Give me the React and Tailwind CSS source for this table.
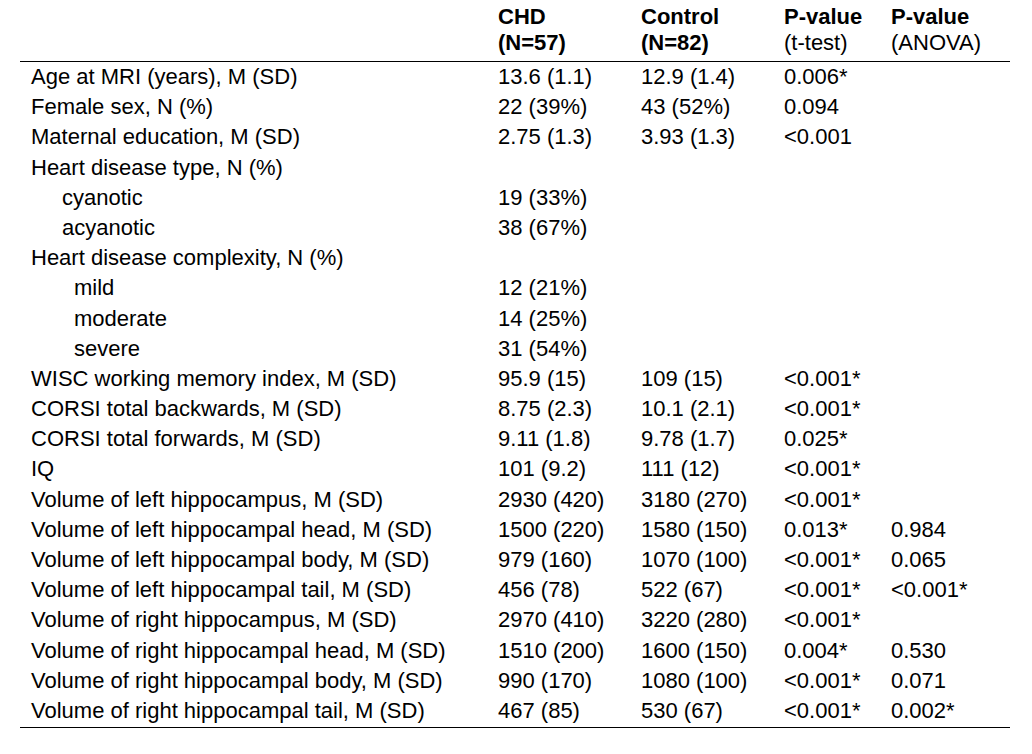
import React from "react";

const rows = [
  { label: "Age at MRI (years), M (SD)", chd: "13.6 (1.1)", ctrl: "12.9 (1.4)", t: "0.006*", a: "" },
  { label: "Female sex, N (%)", chd: "22 (39%)", ctrl: "43 (52%)", t: "0.094", a: "" },
  { label: "Maternal education, M (SD)", chd: "2.75 (1.3)", ctrl: "3.93 (1.3)", t: "<0.001", a: "" },
  { label: "Heart disease type, N (%)", chd: "", ctrl: "", t: "", a: "" },
  { label: "cyanotic", indent: 1, chd: "19 (33%)", ctrl: "", t: "", a: "" },
  { label: "acyanotic", indent: 1, chd: "38 (67%)", ctrl: "", t: "", a: "" },
  { label: "Heart disease complexity, N (%)", chd: "", ctrl: "", t: "", a: "" },
  { label: "mild", indent: 2, chd: "12 (21%)", ctrl: "", t: "", a: "" },
  { label: "moderate", indent: 2, chd: "14 (25%)", ctrl: "", t: "", a: "" },
  { label: "severe", indent: 2, chd: "31 (54%)", ctrl: "", t: "", a: "" },
  { label: "WISC working memory index, M (SD)", chd: "95.9 (15)", ctrl: "109 (15)", t: "<0.001*", a: "" },
  { label: "CORSI total backwards, M (SD)", chd: "8.75 (2.3)", ctrl: "10.1 (2.1)", t: "<0.001*", a: "" },
  { label: "CORSI total forwards, M (SD)", chd: "9.11 (1.8)", ctrl: "9.78 (1.7)", t: "0.025*", a: "" },
  { label: "IQ", chd: "101 (9.2)", ctrl: "111 (12)", t: "<0.001*", a: "" },
  { label: "Volume of left hippocampus, M (SD)", chd: "2930 (420)", ctrl: "3180 (270)", t: "<0.001*", a: "" },
  { label: "Volume of left hippocampal head, M (SD)", chd: "1500 (220)", ctrl: "1580 (150)", t: "0.013*", a: "0.984" },
  { label: "Volume of left hippocampal body, M (SD)", chd: "979 (160)", ctrl: "1070 (100)", t: "<0.001*", a: "0.065" },
  { label: "Volume of left hippocampal tail, M (SD)", chd: "456 (78)", ctrl: "522 (67)", t: "<0.001*", a: "<0.001*" },
  { label: "Volume of right hippocampus, M (SD)", chd: "2970 (410)", ctrl: "3220 (280)", t: "<0.001*", a: "" },
  { label: "Volume of right hippocampal head, M (SD)", chd: "1510 (200)", ctrl: "1600 (150)", t: "0.004*", a: "0.530" },
  { label: "Volume of right hippocampal body, M (SD)", chd: "990 (170)", ctrl: "1080 (100)", t: "<0.001*", a: "0.071" },
  { label: "Volume of right hippocampal tail, M (SD)", chd: "467 (85)", ctrl: "530 (67)", t: "<0.001*", a: "0.002*" },
];

const cols = "grid grid-cols-[478px_143px_143px_107px_1fr]";

function App() {
  return (
    <div
      className="w-[1032px] h-[754px] bg-white text-black pl-[20px] pr-[22px] pt-[4px] text-[22px]"
      style={{ fontFamily: '"Liberation Sans", Arial, sans-serif' }}
    >
      <div className={`${cols} leading-[26px] pb-[5px] border-b-[1.5px] border-black`}>
        <div />
        <div className="font-bold">
          CHD
          <br />
          (N=57)
        </div>
        <div className="font-bold">
          Control
          <br />
          (N=82)
        </div>
        <div>
          <span className="font-bold">P-value</span>
          <br />
          (t-test)
        </div>
        <div>
          <span className="font-bold">P-value</span>
          <br />
          (ANOVA)
        </div>
      </div>
      <div className="border-b-[1.5px] border-black pb-[1px]">
        {rows.map((r) => (
          <div key={r.label} className={`${cols} h-[30.2px] leading-[30.2px] whitespace-nowrap`}>
            <div
              className={
                r.indent === 2 ? "pl-[54px]" : r.indent === 1 ? "pl-[42px]" : "pl-[11px]"
              }
            >
              {r.label}
            </div>
            <div>{r.chd}</div>
            <div>{r.ctrl}</div>
            <div>{r.t}</div>
            <div>{r.a}</div>
          </div>
        ))}
      </div>
    </div>
  );
}

export default App;
